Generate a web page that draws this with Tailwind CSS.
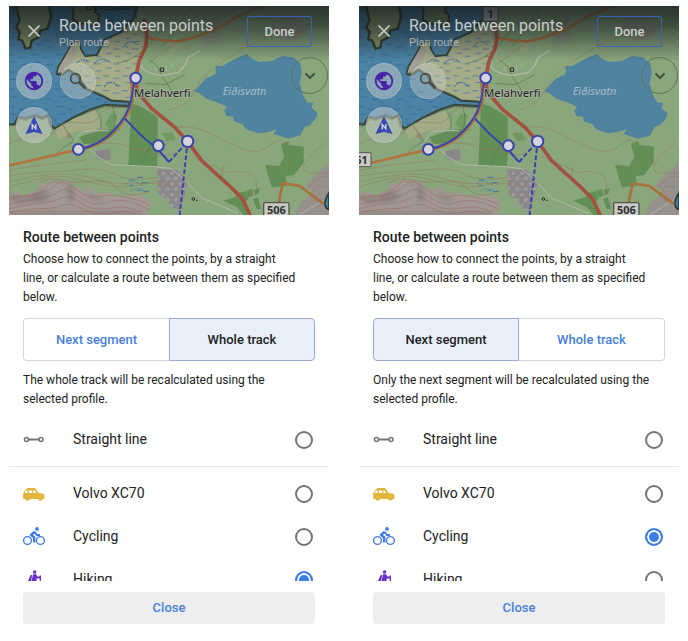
<!DOCTYPE html>
<html lang="en">
<head>
<meta charset="utf-8">
<meta name="viewport" content="width=device-width, initial-scale=1">
<title>Route between points</title>
<script src="https://cdn.jsdelivr.net/npm/@tailwindcss/browser@4"></script>
</head>
<body class="bg-white font-[Roboto,sans-serif] text-[#222]">

<!-- Shared drawings -->
<svg class="absolute size-0" aria-hidden="true">
  <defs>
    <linearGradient id="shade" x1="0" y1="0" x2="0" y2="1">
      <stop offset="0" stop-color="#10161a" stop-opacity=".8"/>
      <stop offset=".5" stop-color="#10161a" stop-opacity=".48"/>
      <stop offset="1" stop-color="#10161a" stop-opacity="0"/>
    </linearGradient>
    <pattern id="marsh" width="58" height="44" patternUnits="userSpaceOnUse">
      <path d="M4 8h18M34 15h20M14 28h16M40 37h16" stroke="#4a76a0" stroke-width="2.5"/>
    </pattern>
    <pattern id="waves" width="74" height="52" patternUnits="userSpaceOnUse">
      <path d="M4 8h24M40 16h18M16 30h20M50 38h20M0 46h10" stroke="#2f6899" stroke-width="2.5"/>
    </pattern>
    <pattern id="stones" width="26" height="32" patternUnits="userSpaceOnUse">
      <g fill="none" stroke="#b4b1b3" stroke-width="2.5"><circle cx="7" cy="8" r="3"/><circle cx="19" cy="23" r="4"/></g>
    </pattern>
    <filter id="soft" x="-10%" y="-10%" width="120%" height="120%"><feGaussianBlur stdDeviation="7"/></filter>
    <path id="sea" d="M0 0H398L388 50 345 98 300 118 275 165 240 168 228 148 222 122 200 130 185 160 160 200 155 222 172 225 190 210 215 226 245 268 296 290 318 302 375 305 370 318 300 314 255 328 205 352 150 385 140 378 130 345 112 354 90 346 60 356 40 350 28 372 0 372Z"/>
  </defs>

  <symbol id="terrain" viewBox="12 18 960 627">
    <rect x="12" y="18" width="960" height="627" fill="#8aa67d"/>
    <!-- sea and coast -->
    <use href="#sea" fill="none" stroke="#3f4f38" stroke-width="14" stroke-linejoin="round" opacity=".5"/>
    <use href="#sea" fill="#4c82a4" stroke="#36463a" stroke-width="6" stroke-linejoin="round"/>
    <use href="#sea" fill="url(#waves)"/>
    <path d="M30 10 44 60 34 82 44 96 40 118 52 122 62 146 76 142 80 122 100 112 106 92 128 86 138 52 132 10Z" fill="#8a9c70" stroke="#35412b" stroke-width="7"/>
    <path d="M196 10 206 34 203 58 222 72 246 70 262 80 280 66 282 46 270 36 272 10Z" fill="#7d9269" stroke="#35412b" stroke-width="6"/>
    <!-- marshy headland -->
    <path d="M404 80 348 100 302 120 278 168 240 172 226 150 220 125 202 132 186 162 163 202 158 218 192 205 218 222 248 264 298 286 320 298 378 302 384 220 400 180 420 140Z" fill="#a5ac88"/>
    <path d="M202 132 186 162 163 202 158 218 192 205 204 176 214 146Z" fill="#a39f95"/>
    <path d="M404 80 348 100 302 120 278 168 240 172 220 200 248 264 298 286 378 302 384 220 400 180 420 140Z" fill="url(#marsh)"/>
    <path d="M360 134q18-18 38 0M268 190q24-26 50 0M215 190q16-18 36-6M298 260q20-26 42 0" fill="none" stroke="#3f68a0" stroke-width="4" stroke-dasharray="4 4"/>
    <!-- meadows, woods and fields -->
    <path d="M150 388 205 356 272 330 288 378 268 392 214 392 180 410 160 420Z" fill="#a3aa86"/>
    <path d="M250 402 300 388 340 386 318 412 282 430 236 432 222 412Z" fill="#628e55"/>
    <path d="M318 340 338 344 330 372 350 392 320 392 300 372Z" fill="#6f9a62"/>
    <path d="M378 310 404 318 438 338 458 352V416L484 432 458 462 456 498 370 498Z" fill="#628f56"/>
    <path d="M470 400 500 396 512 420 488 424Z" fill="#6f9a62"/>
    <path d="M498 120 530 132 520 150 494 160Z" fill="#9aa485"/>
    <path d="M800 62 850 48 905 70 892 110 850 126 805 110Z" fill="#908f82" opacity=".75"/>
    <path d="M580 70 640 50 655 120 600 140Z" fill="#8e937d" opacity=".8" filter="url(#soft)"/>
    <path d="M900 78 935 40 972 30V90L930 84Z" fill="#6f9a62" opacity=".6"/>
    <path d="M828 432 850 424 852 434 896 440V488L866 526 842 528 846 558 800 562 780 494 822 498 838 470Z" fill="#628f56"/>
    <path d="M655 602 690 592 700 578 724 574 730 596 716 612 736 645H716L696 622Z" fill="#628f56"/>
    <path d="M724 572 742 566 744 588 730 592ZM746 570 764 564 760 582 748 584ZM744 598 758 592 768 626 756 628Z" fill="#628f56"/>
    <path d="M972 488 926 530 900 556 924 576 884 612 870 645H972Z" fill="#96918c"/>
    <path d="M456 508 512 508 532 524 548 550 524 640 500 622 482 596 460 582Z" fill="#8b888a"/>
    <path d="M456 508 512 508 532 524 548 550 524 640 500 622 482 596 460 582Z" fill="url(#stones)"/>
    <path d="M272 452 314 446 318 476 294 484 272 472Z" fill="#8b888a"/>
    <path d="M184 402l12-2 2 12-12 3Z" fill="#a5837a"/>
    <!-- hillside -->
    <path d="M12 582 40 574 60 586 96 570 106 548 130 552 146 536 166 546 186 540 204 556 240 574 250 560 270 566 262 580 310 578 350 592 390 586 420 592 440 610 424 630 436 645H12Z" fill="#a29792"/>
    <g fill="none" stroke="#6b625f" stroke-width="14" opacity=".45" filter="url(#soft)">
      <path d="M16 590q24 14 50 10t44-28M192 556q10 26 4 48M70 596q40 10 60-14"/>
      <path d="M252 582q14 20 40 12M12 640h400" stroke-width="8"/>
    </g>
    <g fill="none" stroke="#9a6660" stroke-width="2" opacity=".7">
      <path d="M12 598q40-10 80-16t60-28 60 12 70 24 90 4 60 24M12 614q50-12 90-18t60-22 60 16 80 18 80 0 50 22M12 626q60-14 96-16t60-16 60 14 90 16 90 16M12 638q60-12 100-12t60-10 60 10 90 12 70 4"/>
      <path d="M12 590q30-4 60-2t54-30 50 0"/>
      <path d="M100 548q36-18 70-8t90 4 80 24 90 8"/>
    </g>
    <!-- contour lines -->
    <g fill="none" stroke="#957559" stroke-width="2" opacity=".7">
      <path d="M12 560q50-14 100-26t100 2 100 22 110-8 60 10M12 545q70-16 130-22t120 12 110 16 120 2M12 528q60-10 110-12t110-8 100 16 130 8M12 512q80-16 140-22t90-10"/>
      <path d="M12 432q40-22 90-26t60-24 60-14 60-20 60-26M250 432q60-8 110 4t90 26 80-14M380 450q70 0 120-40"/>
      <path d="M500 384q60-12 110 14t100 48 90-14 80 42M560 466q30 28 70 32 40 30 60 16 50 0 60 20t0 54M656 500q-12 20-2 28"/>
      <path d="M430 190q60-46 150-110t210-62M490 330q60-10 80-60t120-110 150-60 120-30"/>
      <path d="M852 508q4-30-10-40M960 430q-40 30-60 60t40 30 32-20M910 560q40-40 62-30M950 600q-40 10-30-20t40-20"/>
    </g>
    <g fill="none" stroke="#55794a" stroke-width="2">
      <path d="M336 190q50-10 84-44t60-70M432 180q24 8 40 50l34 50M150 470q20-30 54-44M170 370l40 60M272 330l16 20v40M420 250l60 4 60-30M405 498l30-60M560 20q-40 60-90 120M590 40l40 60M318 310q20 40 6 80"/>
    </g>
    <g fill="none" stroke="#4a77a0" stroke-width="3">
      <path d="M372 540h16M396 532h18M410 548h18M372 556h12M396 572h14M414 574h18"/>
      <path d="M366 552q20-20 44 4M376 574q18-14 40-4" stroke-dasharray="4 4"/>
    </g>
    <!-- minor roads -->
    <g fill="none" stroke="#b3b7ab" stroke-width="4" stroke-linejoin="round">
      <path d="M402 192 418 210 438 220 470 226 520 218 540 196 548 174 584 152"/>
      <path d="M206 428 230 396 262 392H312M248 442 280 472 318 494 450 500 500 506 545 546 590 594 700 640" stroke-width="3"/>
      <path d="M620 30 640 56 630 80 648 106" stroke="#8d8f86"/>
      <path d="M884 645 955 600M450 200v14M484 196v18M500 190v12" stroke-width="2.5"/>
    </g>
    <!-- lake -->
    <path d="M568 274 602 236 632 222V198H652L700 172 728 162 734 172 762 186 802 182 832 168 864 172 886 190 890 218 884 250 896 290 908 308H924L920 324 938 340 932 356 914 376 898 382 886 406 850 416 806 402 814 388 790 396 760 400 724 388 712 372 686 364 684 350 664 348 658 332 666 320 634 306 604 296 584 280Z" fill="#50839f"/>
    <path d="M972 578q-14 22-12 36 4 14 12 14Z" fill="#3f7fa4" stroke="#2c3a3a" stroke-width="5"/>
    <!-- main roads -->
    <g fill="none" stroke-linecap="round" stroke-linejoin="round">
      <path d="M12 496 60 486 220 448M430 114 480 122 520 124 570 112 640 84 700 48 780 14" stroke="#b0763d" stroke-width="8"/>
      <path d="M818 645 824 590 834 550 884 558 954 610" stroke="#a9713c" stroke-width="8"/>
      <path d="M222 450q70-14 112-62t48-86l-2-60" stroke="#a9713c" stroke-width="9"/>
      <path d="M418 60 426 110 422 140 402 184 392 234 396 274 440 326 510 382 552 430 590 482 680 564 712 596 738 650" stroke="#a4523f" stroke-width="11"/>
    </g>
    <!-- planned route -->
    <g fill="none" stroke="#3a45ac" stroke-width="6" stroke-linejoin="round">
      <path d="M220 448q66-12 108-58t50-88l12-68M360 356 404 402 460 450 492 486"/>
      <path d="M492 486 548 424 524 645" stroke-dasharray="14 7"/>
    </g>
    <g fill="#d5d4dc" stroke="#3a45ac" stroke-width="6">
      <circle cx="392" cy="234" r="16"/><circle cx="220" cy="448" r="16"/><circle cx="460" cy="437" r="16"/><circle cx="548" cy="424" r="17"/>
    </g>
    <g fill="none" stroke="#2b2b28" stroke-width="3">
      <circle cx="565" cy="597" r="4"/><path d="M573 601h5"/><path d="M466 214v-10h10v10Z"/>
    </g>
    <rect x="776" y="608" width="76" height="50" rx="4" fill="#c9c9c6" stroke="#55554f" stroke-width="4"/>
  </symbol>

  <symbol id="i-close" viewBox="0 0 14 14"><path d="M1.500 1.500l11 11M12.500 1.500l-11 11" stroke="currentColor" stroke-width="1.700" fill="none"/></symbol>
  <symbol id="i-globe" viewBox="0 0 24 24"><path fill="currentColor" d="M12 2C6.480 2 2 6.480 2 12s4.480 10 10 10 10-4.480 10-10S17.520 2 12 2zm-1 17.930c-3.950-.490-7-3.850-7-7.930 0-.620.080-1.210.210-1.790L9 15v1c0 1.100.900 2 2 2v1.930zm6.900-2.540c-.260-.810-1-1.390-1.900-1.390h-1v-3c0-.550-.450-1-1-1H8v-2h2c.550 0 1-.450 1-1V7h2c1.100 0 2-.900 2-2v-.410c2.930 1.190 5 4.060 5 7.410 0 2.080-.800 3.970-2.100 5.390z"/></symbol>
  <symbol id="i-search" viewBox="0 0 18 18"><circle cx="6.500" cy="6.500" r="4.800" fill="none" stroke="currentColor" stroke-width="1.800"/><path d="M10 10l6.500 6.500" stroke="currentColor" stroke-width="2.600"/></symbol>
  <symbol id="i-compass" viewBox="0 0 18 20"><path d="M9 1l8.500 18L9 17 .5 19z" fill="currentColor"/><path d="M7.200 14.500V9.500l3.600 4.400V9" fill="none" stroke="#d0d4d8" stroke-width="1.400"/></symbol>
  <symbol id="i-chevron" viewBox="0 0 12 8"><path d="M1.500 1.500L6 6l4.500-4.500" fill="none" stroke="currentColor" stroke-width="1.900"/></symbol>
  <symbol id="i-line" viewBox="0 0 22 22"><g fill="none" stroke="currentColor" stroke-width="1.600"><circle cx="3.500" cy="10.500" r="2"/><circle cx="18" cy="10.500" r="2"/><path d="M5.500 10.500H16" stroke-width="2"/></g></symbol>
  <symbol id="i-car" viewBox="0 0 22 22"><path fill="currentColor" fill-rule="evenodd" d="M4 5h8v.8h.6l3 4.200 4.400.8c1 .2 1.500.8 1.500 1.700V15c0 .6-.4 1-1 1h-.7a2.400 2.400 0 0 1-4.600 0H7a2.400 2.400 0 0 1-4.600 0H1c-.6 0-.9-.4-.9-1v-4.200L2.500 6.500 4 5.900zM3 7.500l-1.400 2.500h3v-2.500zm2.800 0v2.500h3.400v-2.500zm4.600 0v2.500h2.900l-1.500-2.500z"/><circle cx="4.700" cy="15.300" r="1.500" fill="currentColor"/><circle cx="17.500" cy="15.300" r="1.500" fill="currentColor"/></symbol>
  <symbol id="i-bike" viewBox="0 0 22 22"><g fill="none" stroke="currentColor"><circle cx="4.500" cy="14.500" r="3.900" stroke-width="1.400"/><circle cx="17.400" cy="14.500" r="3.900" stroke-width="1.400"/><path d="M11.800 5.700L8 8.900l3.200 2.600v5" stroke-width="2.500" stroke-linejoin="round"/><path d="M11.500 5.700l2.300 3.300h3.200" stroke-width="1.800"/></g><circle cx="14" cy="2.900" r="1.900" fill="currentColor"/></symbol>
  <symbol id="i-hike" viewBox="0 0 22 22"><g fill="currentColor"><circle cx="11.600" cy="3" r="1.800"/><path d="M10 5.200h3l1.500 2.300h2V6.500H18V21h-1.300V9.600h-3l-.4 3.900 2 2.500v5h-2v-4l-3-3-1 3.500L7.500 21H5.400l2.200-4.500z"/><path d="M7.600 6h1.600L8 12.500H4.800z"/></g></symbol>
</svg>

<main class="grid grid-cols-2 gap-[30px] px-[9px] pt-1.5">

  <section class="min-w-0">
    <div class="relative h-[209px] overflow-hidden">
      <svg class="absolute inset-0 size-full" viewBox="12 18 960 627" preserveAspectRatio="xMidYMid slice" role="img" aria-label="Map of Melahverfi">
        <use href="#terrain" x="12" y="18" width="960" height="627"/>
        <g font-family="Noto Sans, sans-serif">
          <text x="242" y="29" font-size="34" fill="#1d1f1c">Beitistaðir</text>
          <text x="387" y="290" font-size="34" fill="#1f211f" stroke="#a9b3a2" stroke-width="5" paint-order="stroke">Melahverfi</text>
          <text x="653" y="285" font-size="33" font-style="italic" fill="#a5bdca">Eiðisvatn</text>
          <text x="814" y="642" font-size="33" font-weight="700" text-anchor="middle" fill="#30302d">506</text>
        </g>
        <rect x="12" y="18" width="960" height="165" fill="url(#shade)"/>
      </svg>
      <header class="relative flex items-start pt-2.5 pr-[17px] pl-[18px] text-[#c9cccb]">
        <button type="button" aria-label="Close planner" class="mt-2 mr-[18px] flex"><svg class="size-3.5"><use href="#i-close"/></svg></button>
        <div class="min-w-0 flex-1 whitespace-nowrap">
          <h1 class="text-[16px] leading-[19px]">Route between points</h1>
          <p class="text-[11px] leading-4 text-[#a9b0ad]">Plan route</p>
        </div>
        <button type="button" class="h-[31px] w-[65px] rounded-[3px] border border-[#3b62b4] text-[13px] font-medium">Done</button>
      </header>
      <button type="button" aria-label="Map layers" class="absolute top-[57px] left-[7px] flex size-9 items-center justify-center rounded-full border border-white/15 bg-[#c8cdcb]/50 text-[#4a22a8]"><svg class="size-[22px]"><use href="#i-globe"/></svg></button>
      <button type="button" aria-label="Search" class="absolute top-[57px] left-[51px] flex size-9 items-center justify-center rounded-full border border-white/15 bg-[#c8cdcb]/40 text-[#4b4d48]"><svg class="size-[18px]"><use href="#i-search"/></svg></button>
      <button type="button" aria-label="Compass" class="absolute top-[101px] left-[7px] flex size-9 items-center justify-center rounded-full border border-white/15 bg-[#c8cdcb]/50 text-[#3a49b4]"><svg class="h-5 w-[18px]"><use href="#i-compass"/></svg></button>
      <button type="button" aria-label="Expand" class="absolute top-[51px] right-px flex size-[37px] items-center justify-center rounded-full border border-[#5d7358] text-[#434b40]"><svg class="h-2 w-3"><use href="#i-chevron"/></svg></button>
    </div>

    <div class="px-3.5 pt-3">
      <h2 class="text-[14px] leading-5 font-medium">Route between points</h2>
      <p class="mt-[3px] pr-4 text-[12px] leading-[19px]">Choose how to connect the points, by a straight line, or calculate a route between them as specified below.</p>
      <div class="mt-[11px] grid h-[43px] grid-cols-2 text-[13px] font-medium" role="group" aria-label="Recalculate">
        <button type="button" aria-pressed="false" class="rounded-l border border-r-0 border-[#d5d7da] text-[#4880dc]">Next segment</button>
        <button type="button" aria-pressed="true" class="rounded-r border border-[#92afd8] bg-[#e9f0fc]">Whole track</button>
      </div>
      <p class="mt-2.5 pr-2 text-[12px] leading-[19px]">The whole track will be recalculated using the selected profile.</p>
    </div>

    <div class="mt-[9px] h-[163px] overflow-y-auto text-[14px] [scrollbar-width:none]">
      <label class="flex h-[43px] items-center px-3.5"><svg class="size-[22px] text-[#757575]"><use href="#i-line"/></svg><span class="ml-7 flex-1">Straight line</span><input type="radio" name="left-profile" class="mr-0.5 size-[18px] appearance-none rounded-full border-2 border-[#757575] checked:border-[#3f7de8] checked:bg-[#3f7de8] checked:shadow-[inset_0_0_0_2px_white]"></label>
      <hr class="my-[5px] border-[#e4e5e7]">
      <label class="flex h-[43px] items-center px-3.5"><svg class="size-[22px] text-[#e2b63c]"><use href="#i-car"/></svg><span class="ml-7 flex-1">Volvo XC70</span><input type="radio" name="left-profile" class="mr-0.5 size-[18px] appearance-none rounded-full border-2 border-[#757575] checked:border-[#3f7de8] checked:bg-[#3f7de8] checked:shadow-[inset_0_0_0_2px_white]"></label>
      <label class="flex h-[43px] items-center px-3.5"><svg class="size-[22px] text-[#3f7de8]"><use href="#i-bike"/></svg><span class="ml-7 flex-1">Cycling</span><input type="radio" name="left-profile" class="mr-0.5 size-[18px] appearance-none rounded-full border-2 border-[#757575] checked:border-[#3f7de8] checked:bg-[#3f7de8] checked:shadow-[inset_0_0_0_2px_white]"></label>
      <label class="flex h-[43px] items-center px-3.5"><svg class="size-[22px] text-[#6a30cc]"><use href="#i-hike"/></svg><span class="ml-7 flex-1">Hiking</span><input type="radio" name="left-profile" checked class="mr-0.5 size-[18px] appearance-none rounded-full border-2 border-[#757575] checked:border-[#3f7de8] checked:bg-[#3f7de8] checked:shadow-[inset_0_0_0_2px_white]"></label>
    </div>
    <div class="px-3.5 pt-[11px]">
      <button type="button" class="h-8 w-full rounded-sm bg-[#eeeeee] text-[13px] font-medium text-[#4880dc]">Close</button>
    </div>
  </section>

  <section class="min-w-0">
    <div class="relative h-[209px] overflow-hidden">
      <svg class="absolute inset-0 size-full" viewBox="12 18 960 627" preserveAspectRatio="xMidYMid slice" role="img" aria-label="Map of Melahverfi">
        <use href="#terrain" x="12" y="18" width="960" height="627"/>
        <g fill="#c9c9c6" stroke="#55554f" stroke-width="3"><rect x="384" y="20" width="45" height="44" rx="3"/><rect x="-10" y="458" width="58" height="42" rx="3"/></g>
        <g font-family="Noto Sans, sans-serif">
          <text x="387" y="290" font-size="34" fill="#1f211f" stroke="#a9b3a2" stroke-width="5" paint-order="stroke">Melahverfi</text>
          <text x="653" y="285" font-size="33" font-style="italic" fill="#a5bdca">Eiðisvatn</text>
          <text x="814" y="642" font-size="33" font-weight="700" text-anchor="middle" fill="#30302d">506</text>
          <text x="406" y="55" font-size="33" font-weight="700" text-anchor="middle" fill="#30302d">1</text>
          <text x="38" y="493" font-size="32" font-weight="700" text-anchor="end" fill="#30302d">51</text>
        </g>
        <rect x="12" y="18" width="960" height="165" fill="url(#shade)"/>
      </svg>
      <header class="relative flex items-start pt-2.5 pr-[17px] pl-[18px] text-[#c9cccb]">
        <button type="button" aria-label="Close planner" class="mt-2 mr-[18px] flex"><svg class="size-3.5"><use href="#i-close"/></svg></button>
        <div class="min-w-0 flex-1 whitespace-nowrap">
          <h1 class="text-[16px] leading-[19px]">Route between points</h1>
          <p class="text-[11px] leading-4 text-[#a9b0ad]">Plan route</p>
        </div>
        <button type="button" class="h-[31px] w-[65px] rounded-[3px] border border-[#3b62b4] text-[13px] font-medium">Done</button>
      </header>
      <button type="button" aria-label="Map layers" class="absolute top-[57px] left-[7px] flex size-9 items-center justify-center rounded-full border border-white/15 bg-[#c8cdcb]/50 text-[#4a22a8]"><svg class="size-[22px]"><use href="#i-globe"/></svg></button>
      <button type="button" aria-label="Search" class="absolute top-[57px] left-[51px] flex size-9 items-center justify-center rounded-full border border-white/15 bg-[#c8cdcb]/40 text-[#4b4d48]"><svg class="size-[18px]"><use href="#i-search"/></svg></button>
      <button type="button" aria-label="Compass" class="absolute top-[101px] left-[7px] flex size-9 items-center justify-center rounded-full border border-white/15 bg-[#c8cdcb]/50 text-[#3a49b4]"><svg class="h-5 w-[18px]"><use href="#i-compass"/></svg></button>
      <button type="button" aria-label="Expand" class="absolute top-[51px] right-px flex size-[37px] items-center justify-center rounded-full border border-[#5d7358] text-[#434b40]"><svg class="h-2 w-3"><use href="#i-chevron"/></svg></button>
    </div>

    <div class="px-3.5 pt-3">
      <h2 class="text-[14px] leading-5 font-medium">Route between points</h2>
      <p class="mt-[3px] pr-4 text-[12px] leading-[19px]">Choose how to connect the points, by a straight line, or calculate a route between them as specified below.</p>
      <div class="mt-[11px] grid h-[43px] grid-cols-2 text-[13px] font-medium" role="group" aria-label="Recalculate">
        <button type="button" aria-pressed="true" class="rounded-l border border-[#92afd8] bg-[#e9f0fc]">Next segment</button>
        <button type="button" aria-pressed="false" class="rounded-r border border-l-0 border-[#d5d7da] text-[#4880dc]">Whole track</button>
      </div>
      <p class="mt-2.5 pr-2 text-[12px] leading-[19px]">Only the next segment will be recalculated using the selected profile.</p>
    </div>

    <div class="mt-[9px] h-[163px] overflow-y-auto text-[14px] [scrollbar-width:none]">
      <label class="flex h-[43px] items-center px-3.5"><svg class="size-[22px] text-[#757575]"><use href="#i-line"/></svg><span class="ml-7 flex-1">Straight line</span><input type="radio" name="right-profile" class="mr-0.5 size-[18px] appearance-none rounded-full border-2 border-[#757575] checked:border-[#3f7de8] checked:bg-[#3f7de8] checked:shadow-[inset_0_0_0_2px_white]"></label>
      <hr class="my-[5px] border-[#e4e5e7]">
      <label class="flex h-[43px] items-center px-3.5"><svg class="size-[22px] text-[#e2b63c]"><use href="#i-car"/></svg><span class="ml-7 flex-1">Volvo XC70</span><input type="radio" name="right-profile" class="mr-0.5 size-[18px] appearance-none rounded-full border-2 border-[#757575] checked:border-[#3f7de8] checked:bg-[#3f7de8] checked:shadow-[inset_0_0_0_2px_white]"></label>
      <label class="flex h-[43px] items-center px-3.5"><svg class="size-[22px] text-[#3f7de8]"><use href="#i-bike"/></svg><span class="ml-7 flex-1">Cycling</span><input type="radio" name="right-profile" checked class="mr-0.5 size-[18px] appearance-none rounded-full border-2 border-[#757575] checked:border-[#3f7de8] checked:bg-[#3f7de8] checked:shadow-[inset_0_0_0_2px_white]"></label>
      <label class="flex h-[43px] items-center px-3.5"><svg class="size-[22px] text-[#6a30cc]"><use href="#i-hike"/></svg><span class="ml-7 flex-1">Hiking</span><input type="radio" name="right-profile" class="mr-0.5 size-[18px] appearance-none rounded-full border-2 border-[#757575] checked:border-[#3f7de8] checked:bg-[#3f7de8] checked:shadow-[inset_0_0_0_2px_white]"></label>
    </div>
    <div class="px-3.5 pt-[11px]">
      <button type="button" class="h-8 w-full rounded-sm bg-[#eeeeee] text-[13px] font-medium text-[#4880dc]">Close</button>
    </div>
  </section>

</main>
</body>
</html>
